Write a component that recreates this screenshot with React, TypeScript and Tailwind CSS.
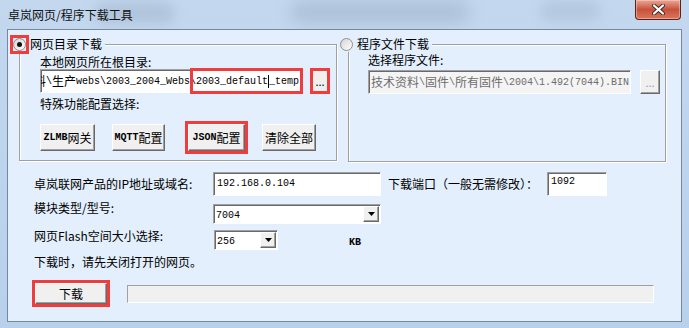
import React from "react";

const CJK_RUN = /[\u3000-\u303f\u4e00-\u9fff\uff00-\uffef]+|[^\u3000-\u303f\u4e00-\u9fff\uff00-\uffef]+/g;
const IS_CJK = /[\u3000-\u303f\u4e00-\u9fff\uff00-\uffef]/;

// SimSun-ish mix: narrow mono latin, full size CJK
const Mixed = ({ text }: { text: string }) => (
  <>
    {(text.match(CJK_RUN) || []).map((part, i) =>
      IS_CJK.test(part) ? (
        <span key={i} className="text-[12px] font-normal font-['Noto_Sans_CJK_SC',sans-serif]">
          {part}
        </span>
      ) : (
        <span key={i}>{part}</span>
      )
    )}
  </>
);

const sunken =
  "border border-t-[#a0a0a0] border-l-[#a0a0a0] border-r-white border-b-white shadow-[inset_1px_1px_0_#696969]";
const raised =
  "border border-t-white border-l-white border-r-[#696969] border-b-[#696969] shadow-[inset_-1px_-1px_0_#a0a0a0] bg-[#f0f0f0]";
const mono = "font-['Liberation_Mono','Noto_Sans_CJK_SC',monospace]";

const Radio = ({ checked }: { checked?: boolean }) => (
  <span className="w-[13px] h-[13px] shrink-0 rounded-full border border-[#8e8f8f] bg-linear-to-br from-[#d4d4d4] to-white flex items-center justify-center">
    {checked && <span className="w-[5px] h-[5px] rounded-full bg-[#111]" />}
  </span>
);

const RedBox = () => (
  <span className="absolute -inset-[3px] border-[3px] border-[#f03c3c] pointer-events-none" />
);

const Label = ({ children }: { children: React.ReactNode }) => (
  <p className="text-[12px] leading-[14px] text-black whitespace-nowrap">{children}</p>
);

const Combo = ({ value }: { value: string }) => (
  <div className={`${sunken} bg-white w-full h-full flex items-center justify-between`}>
    <span className={`${mono} text-[10px] pl-[2px] pt-[2px]`}>{value}</span>
    <span className={`${raised} w-[16px] h-[16px] mr-px flex items-center justify-center`}>
      <svg width="7" height="4" viewBox="0 0 7 4">
        <path d="M0 0 H7 L3.5 4 Z" fill="#000" />
      </svg>
    </span>
  </div>
);

const GroupBox = ({
  title,
  checked,
  legendLeft,
  children,
  extra,
}: {
  title: string;
  checked?: boolean;
  legendLeft: string;
  children: React.ReactNode;
  extra?: React.ReactNode;
}) => (
  <div className="relative w-[318px] border border-[#a0a0a0] shadow-[1px_1px_0_white,inset_1px_1px_0_white]">
    <div className={`absolute ${legendLeft} -top-[9px] h-[16px] flex items-center bg-[#e3effc] pr-[3px]`}>
      <span className="relative">
        <Radio checked={checked} />
        {extra}
      </span>
      <span className="ml-[4px] text-[12px] leading-[16px] text-black">{title}</span>
    </div>
    {children}
  </div>
);

export default function App() {
  const pathText = "D:\\资料\\生产webs\\2003_2004_Webs\\2003_default";
  return (
    <div className="relative w-[689px] h-[328px] overflow-hidden bg-linear-to-b from-[#c3d8ef] to-[#b7d0ec] font-['Noto_Sans_CJK_SC','Noto_Sans',sans-serif]">
      {/* blurred glass background */}
      <div className="absolute left-[95px] top-[2px] w-[80px] h-[22px] rounded-full bg-[#9fb3c9] opacity-50 blur-[6px]" />
      <div className="absolute left-[290px] top-[0px] w-[180px] h-[24px] rounded-full bg-[#9aaec6] opacity-50 blur-[8px]" />
      <div className="absolute left-[540px] top-[0px] w-[60px] h-[22px] rounded-full bg-[#a7bcd3] opacity-50 blur-[6px]" />

      {/* title bar */}
      <div className="relative flex h-[29px]">
        <div className="flex-1 pl-[8px] pt-[7px] text-[12px] leading-[16px] text-[#111]">卓岚网页/程序下载工具</div>
        <div className="mr-[8px] w-[46px] h-[20px] rounded-b-[4px] border border-t-0 border-[#5a2219] bg-linear-to-b from-[#e9a797] via-[#c8513b] to-[#d9765c] flex items-center justify-center shadow-[inset_0_0_0_1px_rgba(255,220,210,0.45)]">
          <svg width="13" height="11" viewBox="0 0 13 11">
            <path d="M2 1.5 L11 9.5 M11 1.5 L2 9.5" stroke="#3b2b2b" strokeWidth="4" strokeLinecap="round" />
            <path d="M2 1.5 L11 9.5 M11 1.5 L2 9.5" stroke="#fff" strokeWidth="2.2" strokeLinecap="round" />
          </svg>
        </div>
      </div>

      {/* client area */}
      <div className="relative ml-[7px] w-[675px] h-[293px] border border-[#76889d] bg-[#e3effc]">
        {/* group boxes */}
        <div className="flex items-start mt-[14px] ml-[11px] gap-[11px]">
          <GroupBox title="网页目录下载" checked legendLeft="-left-[7px]" extra={<RedBox />}>
            <div className="h-[115px] pl-[20px]">
              <div className="pt-[10px]">
                <Label>本地网页所在根目录:</Label>
              </div>
              <div className="flex h-[24px]">
                <div className={`relative w-[263px] h-[24px] ${sunken} bg-white`}>
                  <div className={`absolute inset-0 overflow-hidden flex justify-end items-center pr-[3px] ${mono} text-[10px] whitespace-nowrap text-black`}>
                    <span className="flex items-center">
                      <Mixed text={pathText} />
                      <span className="inline-block w-px h-[13px] bg-black" />
                      <span>_temp</span>
                    </span>
                  </div>
                  <span className="absolute left-[149px] right-[-1px] -top-[2px] -bottom-[2px] border-[3px] border-[#f03c3c]" />
                </div>
                <div className="relative ml-[7px]">
                  <button className={`${raised} w-[20px] h-[24px] flex items-end justify-center pb-[5px] text-[11px] leading-none text-black`}>...</button>
                  <span className="absolute -inset-y-px -inset-x-0 border-[3px] border-[#f03c3c]" />
                </div>
              </div>
              <div className="mt-[4px]">
                <Label>特殊功能配置选择:</Label>
              </div>
              <div className="flex mt-[13px] h-[27px]">
                <button className={`${raised} ${mono} w-[55px] h-[27px] text-[10px] font-bold flex items-center justify-center`}>
                  <Mixed text="ZLMB网关" />
                </button>
                <button className={`${raised} ${mono} ml-[17px] w-[53px] h-[27px] text-[10px] font-bold flex items-center justify-center`}>
                  <Mixed text="MQTT配置" />
                </button>
                <div className="relative ml-[23px]">
                  <button className={`${raised} ${mono} w-[57px] h-[27px] text-[10px] font-bold flex items-center justify-center`}>
                    <Mixed text="JSON配置" />
                  </button>
                  <RedBox />
                </div>
                <button className={`${raised} ml-[17px] w-[54px] h-[27px] text-[12px] flex items-center justify-center`}>清除全部</button>
              </div>
            </div>
          </GroupBox>

          <GroupBox title="程序文件下载" legendLeft="-left-[9px]">
            <div className="h-[116px] pl-[19px]">
              <div className="pt-[8px]">
                <Label>选择程序文件:</Label>
              </div>
              <div className="flex mt-[3px] h-[24px]">
                <div className={`w-[263px] h-[24px] ${sunken} bg-[#f4f4f4] flex items-center pl-[2px] overflow-hidden whitespace-nowrap ${mono} text-[10px] text-[#6d6d6d]`}>
                  <Mixed text="技术资料\固件\所有固件\2004\1.492(7044).BIN" />
                </div>
                <button className={`${raised} ml-[9px] w-[20px] h-[24px] flex items-end justify-center pb-[5px] text-[11px] leading-none text-[#a0a0a0]`}>...</button>
              </div>
            </div>
          </GroupBox>
        </div>

        {/* lower form */}
        <div className="pl-[26px]">
          <div className="flex items-center h-[24px] mt-[10px]">
            <p className="w-[179px] text-[12px] leading-[16px]">卓岚联网产品的IP地址或域名:</p>
            <div className={`w-[168px] h-[24px] ${sunken} bg-white flex items-center pl-[3px] pb-[2px] ${mono} text-[10px]`}>192.168.0.104</div>
            <p className="ml-[7px] w-[159px] text-[12px] leading-[16px] whitespace-nowrap">下载端口（一般无需修改）：</p>
            <div className={`w-[60px] h-[24px] ${sunken} bg-white pl-[3px] pt-[2px] ${mono} text-[10px] leading-[14px]`}>1092</div>
          </div>

          <div className="flex items-start mt-[4px]">
            <p className="w-[179px] text-[12px] leading-[16px]">模块类型/型号:</p>
            <div className="mt-[4px] w-[168px] h-[20px]">
              <Combo value="7004" />
            </div>
          </div>

          <div className="flex items-start mt-[4px]">
            <p className="w-[180px] text-[12px] leading-[16px] whitespace-nowrap">网页Flash空间大小选择:</p>
            <div className="mt-[2px] w-[64px] h-[20px]">
              <Combo value="256" />
            </div>
            <p className={`ml-[71px] mt-[7px] ${mono} text-[10px] font-bold leading-[16px]`}>KB</p>
          </div>

          <p className="mt-[3px] text-[12px] leading-[16px]">下载时，请先关闭打开的网页。</p>

          <div className="flex items-start mt-[13px]">
            <div className="relative ml-px">
              <button className={`${raised} w-[72px] h-[21px] text-[12px] leading-none flex items-center justify-center`}>下载</button>
              <RedBox />
            </div>
            <div className="ml-[20px] mt-[2px] w-[527px] h-[18px] bg-[#f0f0f0] border border-t-[#a0a0a0] border-l-[#a0a0a0] border-r-white border-b-white" />
          </div>
        </div>
      </div>
    </div>
  );
}
